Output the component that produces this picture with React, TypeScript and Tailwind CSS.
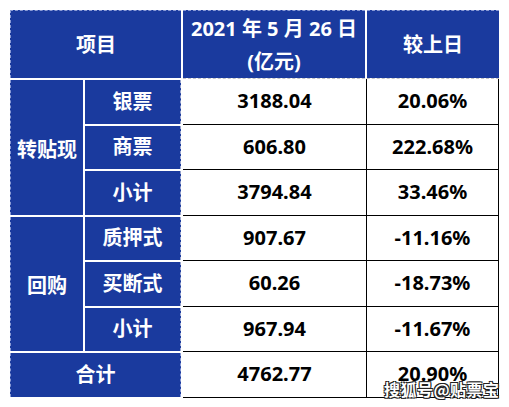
const blue = 'bg-[#1a3a9e]';

const rows = [
  { value: '3188.04', change: '20.06%' },
  { value: '606.80', change: '222.68%' },
  { value: '3794.84', change: '33.46%' },
  { value: '907.67', change: '-11.16%' },
  { value: '60.26', change: '-18.73%' },
  { value: '967.94', change: '-11.67%' },
  { value: '4762.77', change: '20.90%' },
];

const Label = ({ text, className = '' }: { text: string; className?: string }) => (
  <div className={`${blue} flex items-center justify-center text-white ${className}`}>{text}</div>
);

export default function App() {
  return (
    <div className="relative w-[509px] h-[407px] bg-white font-['Noto_Sans','Noto_Sans_CJK_SC',sans-serif] font-bold text-[20px]">
      <div className="flex pt-[10px] pl-[10px]">
        {/* blue labels */}
        <div className="grid grid-cols-[73px_96px] grid-rows-[68px_repeat(7,43.5px)] gap-[2px]">
          <Label text="项目" className="col-span-2 border-t border-l border-dashed border-[#8a9bd6]" />
          <Label text="转贴现" className="row-span-3 border-l border-dashed border-[#8a9bd6] pt-[6px]" />
          <Label text="银票" className="border-r border-dashed border-[#9aa6cf]" />
          <Label text="商票" className="border-r border-dashed border-[#9aa6cf]" />
          <Label text="小计" className="border-r border-dashed border-[#9aa6cf]" />
          <Label text="回购" className="row-span-3 border-l border-dashed border-[#8a9bd6] pt-[5px]" />
          <Label text="质押式" className="border-r border-dashed border-[#9aa6cf]" />
          <Label text="买断式" className="border-r border-dashed border-[#9aa6cf]" />
          <Label text="小计" className="border-r border-dashed border-[#9aa6cf]" />
          <Label text="合计" className="col-span-2 border-l border-r border-dashed border-[#8a9bd6]" />
        </div>

        {/* values */}
        <div className="ml-[2px] w-[316px] flex flex-col">
          <div className="flex gap-[2px] h-[68px]">
            <div className={`${blue} w-[182px] flex flex-col items-center justify-center text-white leading-[33px] border-t border-dashed border-[#8a9bd6]`}>
              <span>2021 年 5 月 26 日</span>
              <span>(亿元)</span>
            </div>
            <Label text="较上日" className="flex-1 border-t border-dashed border-[#8a9bd6]" />
          </div>
          <div className="border-t border-dashed border-[#c4c4c4]">
            {rows.map((r, i) => (
              <div key={i} className="flex h-[45.5px] border-b border-r border-black text-black">
                <div className="w-[184px] border-r border-black flex items-center justify-center">{r.value}</div>
                <div className="flex-1 flex items-center justify-center">{r.change}</div>
              </div>
            ))}
          </div>
        </div>
      </div>

      <div className="absolute left-[384px] top-[377px] text-[16px] tracking-[0.5px] text-white font-['Noto_Sans_CJK_SC',sans-serif] font-bold [text-shadow:1px_1px_0_#222,-1px_-1px_0_#222,1px_-1px_0_#222,-1px_1px_0_#222]">
        搜狐号@贴票宝
      </div>
    </div>
  );
}
